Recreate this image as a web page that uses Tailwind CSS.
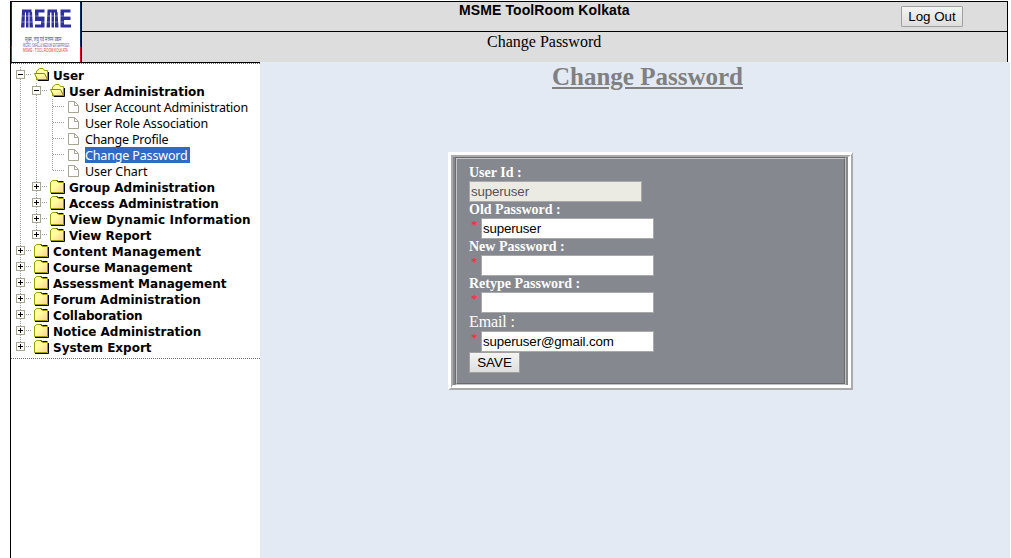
<!DOCTYPE html>
<html lang="en">
<head>
<meta charset="utf-8">
<title>Change Password</title>
<script src="https://cdn.jsdelivr.net/npm/@tailwindcss/browser@4"></script>
</head>
<body class="w-[1011px] h-[558px] overflow-hidden bg-white text-black font-['Liberation_Serif',serif]">
<svg class="absolute size-0">
  <defs>
    <g id="v" stroke="#a0a0a0" stroke-dasharray="1 1"><path d="M8.5 0V16"/></g>
    <g id="box"><path d="M8.5 0V3M8.5 12V16M14 7.5H20" stroke="#a0a0a0" stroke-dasharray="1 1"/><rect x="4.5" y="3.5" width="8" height="8" fill="#fff" stroke="#a5a591"/><path d="M6 7.5H11" stroke="#000"/></g>
    <g id="plus"><use href="#box"/><path d="M8.500 5V10" stroke="#000"/></g>
    <g id="last"><use href="#plus"/><path d="M8.500 12V16" stroke="#fff"/></g>
    <g id="tee" stroke="#a0a0a0" stroke-dasharray="1 1"><path d="M8.500 0V16M9 7.500H20"/></g>
    <g id="ell" stroke="#a0a0a0" stroke-dasharray="1 1"><path d="M8.500 0V8M9 7.500H20"/></g>
    <linearGradient id="g" x1="0" y1="0" x2="1" y2="1"><stop offset=".4" stop-color="#ffff9c"/><stop offset="1" stop-color="#ffce9c"/></linearGradient>
    <g id="folder"><path d="M1 14.500H14.500V4" fill="none" stroke="#000"/><path d="M.5 13.500V3.500L2.500 1.500H6.500L8.500 3.500H13.500V13.500Z" fill="url(#g)" stroke="#9c9c00"/><path d="M6.500 1.500L8.500 2.500H13.500" fill="none" stroke="#000"/></g>
    <g id="open"><path d="M2.500 13V4L5.500 1.500H9L10.500 3.500H13.500V13Z" fill="#ffffb0" stroke="#9c9c00"/><path d="M14.500 5V13.500H4" fill="none" stroke="#000"/><path d="M.5 6.500H10.500L13.500 12.500H3.500Z" fill="url(#g)" stroke="#8c8c00"/></g>
    <g id="file"><path d="M.5 .5H6.500L10.500 4.500V11.500H.5ZM6.500 .5V4.500H10.500" fill="#fff" stroke="#a5a591"/></g>
  </defs>
</svg>
<div class="flex flex-col w-[1000px] h-full ml-[10px] pt-px">
  <header class="flex h-[61px] w-[998px] shrink-0 border-t border-x border-black bg-[#ddd]">
    <div class="w-[71px] bg-white border-r border-black shrink-0">
      <svg width="70" height="60" viewBox="0 0 70 60">
        <path d="M.5 0V45M69.500 0V45" stroke="#002f66"/><path d="M.5 45V60M69.500 45V60" stroke="#e00020"/>
        <g fill="#30309c">
          <path d="M11 7.500h9.500v3h-9.500zM24 7.500h9.500v3h-9.500zM36.500 7.500h9.500v3h-9.500zM49.500 7.500h10v3h-10z"/>
          <path d="M11 10h3l-.5 15.500h-3.500zM15 10h2.500v15.500h-2.500zM18.500 10h2.500l1 15.500h-3.500zM24 10h3.500v4.500h-3.500zM24 14.500h9.500v4.500h-9.500zM30 19h3.500v6.500h-3.500zM24 22.500h7v3h-7zM36.500 10h2.500v15.500H35.500zM40.500 10h2.500v15.500H40.500zM44 10h2.500l1 15.500H44zM49.500 10h3.500v15.500h-3.500zM53 14.500h6.500v3.500h-6.500zM53 22.500h7v3h-7z"/>
        </g>
        <path d="M9 14H61M9 20H61" stroke="#fff" stroke-width=".7" opacity=".5"/>
        <text transform="translate(14 38.500) scale(.6 1)" font-family="'Noto Sans','Noto Sans Devanagari',sans-serif" font-size="6.500" fill="#4a4a9c">सूक्ष्म, लघु एवं मध्यम उद्यम</text>
        <text transform="translate(12 45) scale(.49 1)" font-family="Liberation Sans" font-size="4.800" fill="#5555a8">MICRO, SMALL &amp; MEDIUM ENTERPRISES</text>
        <text transform="translate(12 50) scale(.64 1)" font-family="Liberation Sans" font-size="4.800" fill="#e03040">MSME - TOOL ROOM KOLKATA</text>
      </svg>
    </div>
    <div class="flex-1 flex flex-col">
      <div class="h-[30px] flex border-b border-black">
        <div class="w-[925px] pl-[377px] text-[14px] leading-[17px] font-bold font-['Liberation_Sans',sans-serif] whitespace-nowrap flex">
          <span class="w-[442px] tracking-[.1px]">MSME ToolRoom Kolkata</span>
          <button class="mt-[4px] w-[62px] h-[21px] shrink-0 border border-[#a0a0a0] rounded-[1px] bg-linear-to-b from-[#f4f4f4] to-[#dedede] font-normal text-[13.330px] leading-[18px]">Log Out</button>
        </div>
      </div>
      <div class="pl-[405px] text-[16px] leading-[19px] whitespace-nowrap">Change Password</div>
    </div>
  </header>
  <div class="flex flex-1">
    <aside class="w-[250px] shrink-0 border-l border-black font-['DejaVu_Sans',sans-serif] bg-white">
      <div class="border-t border-black"></div>
      <nav class="h-[296px] border-y border-dotted border-[#707070] pl-px pt-[3px] text-[12px] leading-[18px] whitespace-nowrap font-bold">
        <div class="flex h-4"><svg class="w-[22px] h-4"><use href="#box"/></svg><svg class="w-[19px] h-4"><use href="#open"/></svg><span>User</span></div>
        <div class="flex h-4"><svg class="w-[38px] h-4"><use href="#v"/><use href="#box" x="16"/></svg><svg class="w-[19px] h-4"><use href="#open"/></svg><span>User Administration</span></div>
        <div class="flex h-4 leading-[18px] text-[12.500px] tracking-[-.2px] font-normal font-['Noto_Sans',sans-serif]"><svg class="w-[56px] h-4"><use href="#v"/><use href="#v" x="16"/><use href="#tee" x="32"/></svg><svg class="w-[17px] h-4"><use href="#file" y="2"/></svg><span>User Account Administration</span></div>
        <div class="flex h-4 leading-[18px] text-[12.500px] tracking-[-.15px] font-normal font-['Noto_Sans',sans-serif]"><svg class="w-[56px] h-4"><use href="#v"/><use href="#v" x="16"/><use href="#tee" x="32"/></svg><svg class="w-[17px] h-4"><use href="#file" y="2"/></svg><span>User Role Association</span></div>
        <div class="flex h-4 leading-[18px] text-[12.500px] tracking-[-.2px] font-normal font-['Noto_Sans',sans-serif]"><svg class="w-[56px] h-4"><use href="#v"/><use href="#v" x="16"/><use href="#tee" x="32"/></svg><svg class="w-[17px] h-4"><use href="#file" y="2"/></svg><span>Change Profile</span></div>
        <div class="flex h-4 leading-[18px] text-[12.500px] tracking-[-.15px] font-normal font-['Noto_Sans',sans-serif]"><svg class="w-[56px] h-4"><use href="#v"/><use href="#v" x="16"/><use href="#tee" x="32"/></svg><svg class="w-[17px] h-4"><use href="#file" y="2"/></svg><span class="w-[105px] bg-[#316ac5] text-white">Change Password</span></div>
        <div class="flex h-4 leading-[18px] text-[12.500px] tracking-[-.05px] font-normal font-['Noto_Sans',sans-serif]"><svg class="w-[56px] h-4"><use href="#v"/><use href="#v" x="16"/><use href="#ell" x="32"/></svg><svg class="w-[17px] h-4"><use href="#file" y="2"/></svg><span>User Chart</span></div>
        <div class="flex h-4"><svg class="w-[38px] h-4"><use href="#v"/><use href="#plus" x="16"/></svg><svg class="w-[19px] h-4"><use href="#folder"/></svg><span>Group Administration</span></div>
        <div class="flex h-4"><svg class="w-[38px] h-4"><use href="#v"/><use href="#plus" x="16"/></svg><svg class="w-[19px] h-4"><use href="#folder"/></svg><span class="tracking-[-.05px]">Access Administration</span></div>
        <div class="flex h-4"><svg class="w-[38px] h-4"><use href="#v"/><use href="#plus" x="16"/></svg><svg class="w-[19px] h-4"><use href="#folder"/></svg><span class="tracking-[.13px]">View Dynamic Information</span></div>
        <div class="flex h-4"><svg class="w-[38px] h-4"><use href="#v"/><use href="#last" x="16"/></svg><svg class="w-[19px] h-4"><use href="#folder"/></svg><span>View Report</span></div>
        <div class="flex h-4"><svg class="w-[22px] h-4"><use href="#plus"/></svg><svg class="w-[19px] h-4"><use href="#folder"/></svg><span class="tracking-[.1px]">Content Management</span></div>
        <div class="flex h-4"><svg class="w-[22px] h-4"><use href="#plus"/></svg><svg class="w-[19px] h-4"><use href="#folder"/></svg><span>Course Management</span></div>
        <div class="flex h-4"><svg class="w-[22px] h-4"><use href="#plus"/></svg><svg class="w-[19px] h-4"><use href="#folder"/></svg><span>Assessment Management</span></div>
        <div class="flex h-4"><svg class="w-[22px] h-4"><use href="#plus"/></svg><svg class="w-[19px] h-4"><use href="#folder"/></svg><span>Forum Administration</span></div>
        <div class="flex h-4"><svg class="w-[22px] h-4"><use href="#plus"/></svg><svg class="w-[19px] h-4"><use href="#folder"/></svg><span class="tracking-[-.1px]">Collaboration</span></div>
        <div class="flex h-4"><svg class="w-[22px] h-4"><use href="#plus"/></svg><svg class="w-[19px] h-4"><use href="#folder"/></svg><span>Notice Administration</span></div>
        <div class="flex h-4"><svg class="w-[22px] h-4"><use href="#last"/></svg><svg class="w-[19px] h-4"><use href="#folder"/></svg><span>System Export</span></div>
      </nav>
    </aside>
    <main class="flex-1 bg-[#e3eaf3]">
      <h1 class="pl-[292px] h-[90px] text-[25px] leading-[29px] font-bold text-[#808080] underline whitespace-nowrap">Change Password</h1>
      <div class="ml-[188px] w-[405px] h-[238px] border-t-3 border-l-3 border-r-2 border-b-2 border-t-white border-l-white border-r-[#aaa] border-b-[#aaa]">
        <div class="h-full border-t-2 border-l-2 border-r-3 border-b-3 border-t-[#aaa] border-l-[#aaa] border-r-white border-b-white bg-[#85888f] px-[2px]">
          <div class="h-full border border-t-[#6b6b6b] border-l-[#6b6b6b] border-r-[#c4c4c4] border-b-[#c4c4c4]">
            <form class="h-full border border-t-[#c4c4c4] border-l-[#c4c4c4] border-r-[#6b6b6b] border-b-[#6b6b6b] pl-[12px] pt-[6px] text-white text-[14px] font-bold">
              <div class="h-4 leading-4">User Id :</div>
              <div class="w-[173px] h-[21px] border border-[#a9a9a9] bg-[#ebebe4] px-px text-[#545454] text-[13.330px] leading-[19px] font-normal font-['Liberation_Sans',sans-serif] tracking-[-.15px]">superuser</div>
              <div class="h-4 leading-4">Old Password :</div>
              <div class="flex h-[21px]"><span class="w-3 pl-[2px] text-[13px] leading-[14px] font-normal text-[#f23]">*</span><div class="w-[173px] border border-[#a9a9a9] bg-white px-px text-black text-[13.330px] leading-[19px] font-normal font-['Liberation_Sans',sans-serif] tracking-[-.15px]">superuser</div></div>
              <div class="h-4 leading-4">New Password :</div>
              <div class="flex h-[21px]"><span class="w-3 pl-[2px] text-[13px] leading-[14px] font-normal text-[#f23]">*</span><div class="w-[173px] border border-[#a9a9a9] bg-white"></div></div>
              <div class="h-4 leading-4">Retype Password :</div>
              <div class="flex h-[21px]"><span class="w-3 pl-[2px] text-[13px] leading-[14px] font-normal text-[#f23]">*</span><div class="w-[173px] border border-[#a9a9a9] bg-white"></div></div>
              <div class="h-[18px] leading-[18px] text-[16px] tracking-[-.1px] font-normal">Email :</div>
              <div class="flex h-[21px]"><span class="w-3 pl-[2px] text-[13px] leading-[14px] font-normal text-[#f23]">*</span><div class="w-[173px] border border-[#a9a9a9] bg-white px-px text-black text-[13.330px] leading-[19px] font-normal font-['Liberation_Sans',sans-serif] tracking-[-.15px]">superuser@gmail.com</div></div>
              <button type="button" class="block w-[51px] h-[21px] border border-[#a0a0a0] bg-linear-to-b from-[#f4f4f4] to-[#dedede] text-black text-[13.330px] leading-[18px] font-normal font-['Liberation_Sans',sans-serif]">SAVE</button>
            </form>
          </div>
        </div>
      </div>
    </main>
  </div>
</div>
</body>
</html>
